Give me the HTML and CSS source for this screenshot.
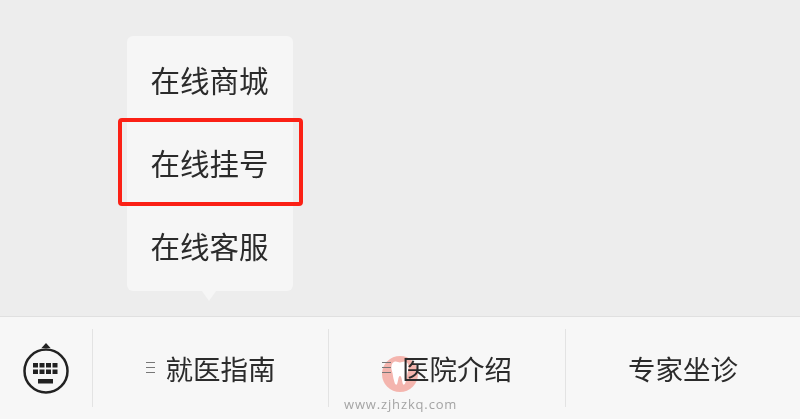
FILE: index.html
```html
<!DOCTYPE html>
<html lang="zh-CN">
<head>
    <meta charset="UTF-8">
    <title>在线挂号</title>
    <link rel="stylesheet" href="styles.css">
</head>
<body>
    <div class="chat">
        <div class="menu">
            <div class="menu-item">在线商城</div>
            <div class="menu-item">在线挂号</div>
            <div class="menu-item">在线客服</div>
        </div>
        <div class="highlight"></div>
    </div>

    <div class="bar">
        <div class="keyboard">
            <svg width="48" height="54" viewBox="0 0 48 54">
                <path d="M24 1l4.500 5h-9z" fill="#222"/>
                <circle cx="24" cy="29" r="21.500" fill="none" stroke="#222" stroke-width="2.500"/>
                <g fill="#222">
                    <rect x="11" y="21" width="5" height="4.500"/>
                    <rect x="17.500" y="21" width="5" height="4.500"/>
                    <rect x="24" y="21" width="5" height="4.500"/>
                    <rect x="30.500" y="21" width="5" height="4.500"/>
                    <rect x="11" y="27.500" width="5" height="4.500"/>
                    <rect x="17.500" y="27.500" width="5" height="4.500"/>
                    <rect x="24" y="27.500" width="5" height="4.500"/>
                    <rect x="30.500" y="27.500" width="5" height="4.500"/>
                    <rect x="16" y="37" width="15" height="4.500"/>
                </g>
            </svg>
        </div>
        <div class="tab"><span class="lines"></span>就医指南</div>
        <div class="tab"><span class="lines"></span>医院介绍</div>
        <div class="tab">专家坐诊</div>
    </div>

    <div class="mark">
        <svg width="36" height="36" viewBox="0 0 36 36">
            <circle cx="18" cy="18" r="18" fill="#f4b5ae"/>
            <path transform="translate(-3.600 -3.600) scale(1.200)" d="M13 8c2-1 3.500 .5 5 .5s3-1.500 5-.5c2.500 1 2.500 5 1.700 7.500-.8 2.500-.8 5-1.700 8-.4 1.800-1 3.500-1.800 3.500s-1.200-1.800-1.600-4c-.3-1.600-.7-3.300-1.600-3.300s-1.300 1.700-1.600 3.300c-.4 2.200-.8 4-1.600 4s-1.400-1.700-1.800-3.500c-.9-3-.9-5.500-1.700-8-.8-2.500-.8-6.500 1.700-7.500z" fill="#fff"/>
        </svg>
    </div>
    <div class="mark-url">www.zjhzkq.com</div>
</body>
</html>
```

FILE: styles.css
```css
html, body {
    margin: 0;
    height: 100%;
}

body {
    position: relative;
    display: flex;
    flex-direction: column;
    width: 800px;
    height: 419px;
    overflow: hidden;
    font-family: "Noto Sans CJK SC", "Noto Sans", sans-serif;
    color: #2b2b2b;
    background-color: #ededed;
    filter: blur(0.4px); /* the source shot is a soft upscale */
}

.chat {
    height: 316px;
    box-sizing: border-box;
    padding: 36px 0 0 127px;
}

.menu {
    position: relative;
    width: 166px;
    height: 255px;
    box-sizing: border-box;
    padding-top: 1px;
    background-color: #f6f6f6;
    border-radius: 6px;
}

/* little arrow under the menu */
.menu::after {
    content: "";
    position: absolute;
    left: 75px;
    bottom: -10px;
    border-left: 7px solid transparent;
    border-right: 7px solid transparent;
    border-top: 10px solid #f6f6f6;
}

.menu-item {
    display: flex;
    align-items: center;
    justify-content: center;
    height: 83px;
    padding-right: 1px;
    font-size: 29.5px;
}

.highlight {
    position: absolute;
    left: 118px;
    top: 118px;
    width: 185px;
    height: 88px;
    box-sizing: border-box;
    border: 4px solid #fb2015;
    border-radius: 4px;
}

.bar {
    display: grid;
    grid-template-columns: 92px 236px 237px 235px;
    flex: 1;
    align-items: center;
    background-color: #f7f7f7;
    border-top: 1px solid #e0e0e0;
    font-size: 27.5px;
}

.keyboard {
    display: flex;
    align-items: center;
    justify-content: center;
    height: 78px;
    padding-top: 1px;
}

.tab {
    position: relative;
    z-index: 1;
    display: flex;
    align-items: center;
    justify-content: center;
    height: 78px;
    padding-bottom: 1px;
    box-sizing: border-box;
    border-left: 1px solid #e3e3e3;
}

.lines {
    width: 9px;
    height: 9px;
    margin-right: 11px;
    border-top: 1px solid #777;
    border-bottom: 1px solid #777;
    background: linear-gradient(#777, #777) center / 100% 1px no-repeat;
}

.mark {
    position: absolute;
    left: 382px;
    top: 356px;
    width: 36px;
    height: 36px;
}

.mark-url {
    position: absolute;
    left: 344px;
    top: 395px;
    font-family: "Open Sans", sans-serif;
    font-size: 13px;
    letter-spacing: 0.85px;
    line-height: 18px;
    color: #a4a4a4;
}
```
